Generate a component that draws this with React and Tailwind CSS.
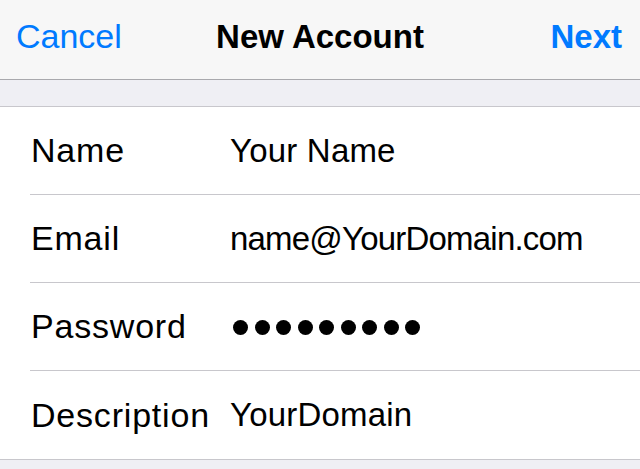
export default function App() {
  const rows = [
    { label: "Name", value: "Your Name" },
    { label: "Email", value: "name@YourDomain.com", tight: true },
    { label: "Password", value: null },
    { label: "Description", value: "YourDomain" },
  ];
  return (
    <div className="w-[640px] h-[469px] overflow-hidden bg-[#efeff4] font-['Liberation_Sans',Arial,sans-serif] text-black">
      <div className="h-[80px] bg-[#f7f7f7] border-b border-[#a9a9ad] flex items-center justify-between px-[16px] pb-[6px]">
        <span className="text-[34px] text-[#007aff] w-[140px]">Cancel</span>
        <span className="text-[33px] font-bold">New Account</span>
        <span className="text-[33px] font-bold text-[#007aff] w-[140px] text-right pr-[2px]">Next</span>
      </div>
      <div className="h-[27px] border-b border-[#c8c7cc]" />
      <div className="bg-white border-b border-[#c8c7cc]">
        {rows.map((r, i) => (
          <div key={r.label} className="pl-[30px]">
            <div className={`h-[88px] flex items-center pr-[16px] ${i < rows.length - 1 ? "border-b border-[#c8c7cc]" : ""}`}>
              <span className="w-[200px] pl-[1px] text-[34px] tracking-[0.8px]">{r.label}</span>
              {r.value ? (
                <span className={`text-[33px] ${r.tight ? "tracking-[-0.8px]" : "tracking-[0.2px]"}`}>{r.value}</span>
              ) : (
                <span className="flex gap-[6.5px] pl-[3px] pt-[2px]">
                  {Array.from({ length: 9 }).map((_, k) => (
                    <span key={k} className="w-[15px] h-[15px] rounded-full bg-black" />
                  ))}
                </span>
              )}
            </div>
          </div>
        ))}
      </div>
    </div>
  );
}
